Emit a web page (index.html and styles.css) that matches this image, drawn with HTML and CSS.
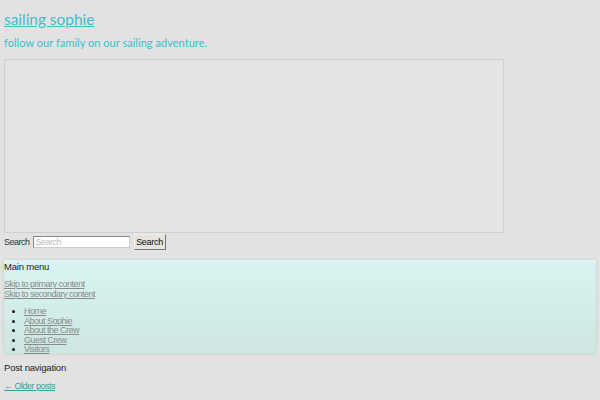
FILE: index.html
```html
<!DOCTYPE html>
<html>
<head>
<meta charset="utf-8">
<link rel="stylesheet" href="styles.css">
</head>
<body>
<div class="page">
  <header class="site-header">
    <h1 class="site-title"><a href="#">sailing sophie</a></h1>
    <p class="site-desc">follow our family on our sailing adventure.</p>
  </header>
  <div class="header-image"></div>
  <form class="search">
    <label class="search-label">Search</label>
    <input class="search-input" type="text" placeholder="Search">
    <button class="search-btn" type="button">Search</button>
  </form>
  <nav class="main-menu">
    <h3 class="menu-title">Main menu</h3>
    <div class="skip">
      <a href="#">Skip to primary content</a>
      <a href="#">Skip to secondary content</a>
    </div>
    <ul class="menu-list">
      <li><a href="#">Home</a></li>
      <li><a href="#">About Sophie</a></li>
      <li><a href="#">About the Crew</a></li>
      <li><a href="#">Guest Crew</a></li>
      <li><a href="#">Visitors</a></li>
    </ul>
  </nav>
  <h3 class="post-nav-title">Post navigation</h3>
  <a class="older" href="#">&larr; Older posts</a>
</div>
</body>
</html>
```
FILE: styles.css
```css
html, body {
  margin: 0;
  padding: 0;
  background: #e2e2e2;
}
.page {
  padding: 0 4px;
  font-family: "Liberation Sans", Arial, sans-serif;
  font-size: 9px;
  letter-spacing: -0.5px;
  color: #222;
}
.site-header {
  padding-top: 9px;
}
.site-title {
  margin: 0;
  font-family: Lato, "Noto Sans", sans-serif;
  font-weight: normal;
  font-size: 15.4px;
  letter-spacing: 0;
  line-height: 20px;
}
.site-title a {
  color: #3dbfcb;
}
.site-desc {
  margin: 6px 0 0 0;
  font-family: Lato, "Noto Sans", sans-serif;
  font-size: 11.1px;
  letter-spacing: 0;
  line-height: 15px;
  color: #3dbfcb;
}
.header-image {
  margin-top: 9px;
  width: 498px;
  height: 172px;
  border: 1px solid #cfcfcf;
  background: #e4e4e4;
}
.search {
  display: flex;
  align-items: center;
  margin-top: 0;
  height: 18px;
}
.search-label {
  color: #333;
}
.search-input {
  margin: 0 0 0 3px;
  width: 97px;
  height: 12px;
  box-sizing: border-box;
  border: 1px solid #888;
  border-right-color: #ccc;
  border-bottom-color: #ccc;
  background: #fff;
  padding: 0 2px;
  font-family: "Liberation Sans", Arial, sans-serif;
  font-size: 9px;
  letter-spacing: -0.5px;
}
.search-input::placeholder {
  color: #bbb;
}
.search-btn {
  margin-left: 4px;
  width: 32px;
  height: 16px;
  padding: 0;
  border: 1px solid #777;
  border-top-color: #eee;
  border-left-color: #eee;
  background: #e6e2dc;
  font-family: "Liberation Sans", Arial, sans-serif;
  font-size: 9px;
  letter-spacing: -0.3px;
  color: #111;
}
.main-menu {
  margin-top: 9px;
  width: 592px;
  box-sizing: border-box;
  padding: 1px 0 1px 0;
  background: linear-gradient(#d9f4f1, #cde6e2);
  box-shadow: 0 0 2px rgba(0,0,0,0.15);
  height: 94px;
}
.menu-title {
  margin: 0;
  font-weight: normal;
  font-size: 9.5px;
  letter-spacing: -0.2px;
  line-height: 12px;
  color: #222;
}
.skip {
  margin-top: 7px;
  display: flex;
  flex-direction: column;
}
.skip a, .menu-list a {
  color: #8a8a8a;
  line-height: 9.5px;
}
.menu-list {
  margin: 8px 0 0 0;
  padding-left: 20px;
  line-height: 9.5px;
}
.menu-list li::marker {
  color: #111;
}
.post-nav-title {
  margin: 8px 0 0 0;
  font-weight: normal;
  font-size: 9.5px;
  letter-spacing: -0.2px;
  line-height: 12px;
  color: #222;
}
.older {
  display: block;
  margin-top: 7px;
  color: #3a9ea2;
  line-height: 11px;
}
```
